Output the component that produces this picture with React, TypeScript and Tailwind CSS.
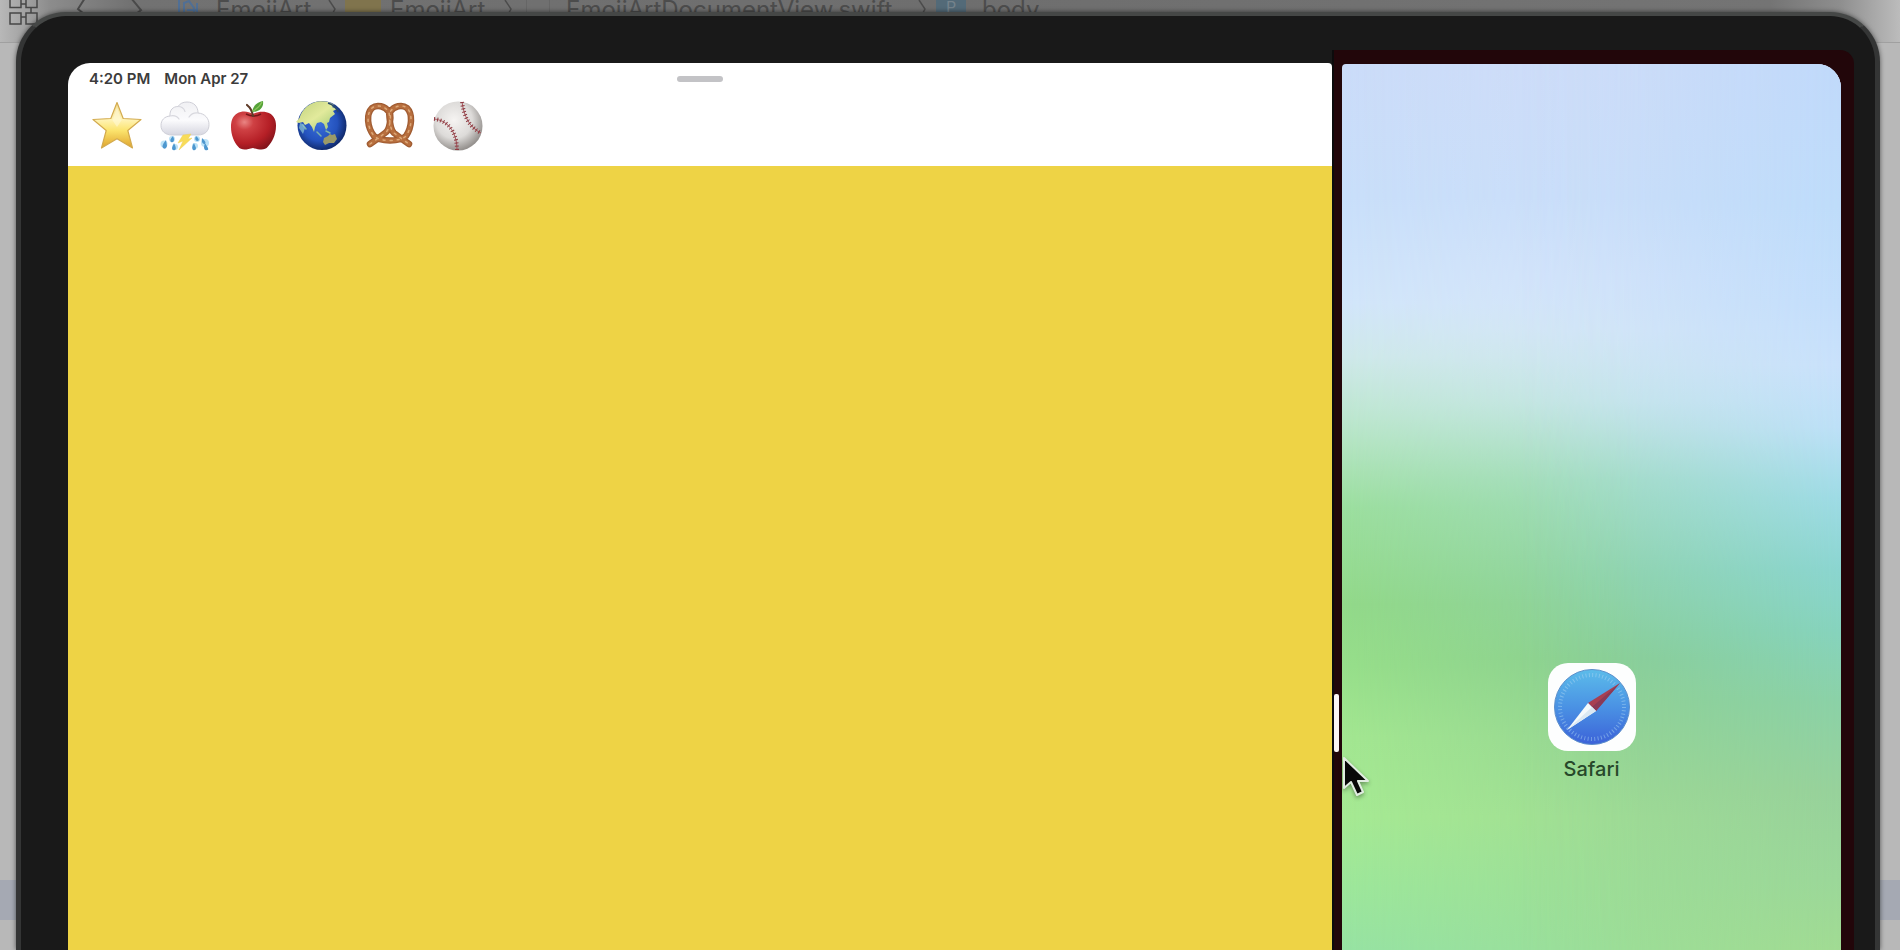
import type { ReactNode } from "react";

function Star() {
  return (
    <svg viewBox="0 0 52 52" className="size-[52px]" aria-hidden="true">
      <defs>
        <linearGradient id="star" x1="0" y1="0" x2="0" y2="1">
          <stop offset="0" stopColor="#f3dc92" />
          <stop offset=".38" stopColor="#fff3b5" />
          <stop offset=".62" stopColor="#fbe36c" />
          <stop offset="1" stopColor="#dfa32c" />
        </linearGradient>
      </defs>
      <path d="M26 2.500 32.200 18.500 50 19.500 36.800 30.500 41.500 48 26 38.800 10.500 48 15.200 30.500 2 19.500 19.800 18.500Z" fill="url(#star)" stroke="#d3ab50" strokeWidth="1.200" strokeLinejoin="round" />
      <path d="M26 7 30.500 20.500 26 27 21.500 20.500Z" fill="#fffbe0" opacity=".5" />
    </svg>
  );
}

function Storm() {
  return (
    <svg viewBox="0 0 52 52" className="size-[52px]" aria-hidden="true">
      <defs>
        <linearGradient id="cloud" x1="0" y1="0" x2="0" y2="1">
          <stop offset="0" stopColor="#f0f0f3" />
          <stop offset=".55" stopColor="#fbfbfd" />
          <stop offset="1" stopColor="#d6d6e0" />
        </linearGradient>
      </defs>
      <path d="M13 35C6 35 2 31 2 25.500 2 20 5.500 16.500 11 16 10.500 10 14 6.500 19 6.500 21 3.500 24 2 28 2 35 2 39 6.500 39 13 46 13.500 50 18.500 50 24.500 50 31 46 35 39 35Z" fill="url(#cloud)" stroke="#cfcfd7" strokeWidth="1" />
      <path d="M11 16c4-1 7 0 9 3M19 6.500c4 0 6 2 7 5M39 13c-4-.5-7 1-9 4" fill="none" stroke="#d8d8de" strokeWidth="1.200" strokeLinecap="round" />
      <path d="m24 35 8-1-3 5 4-1-13 12 4-9-5 2Z" fill="#f8dc58" stroke="#efd05c" strokeWidth=".5" />
      <g fill="#9fd6f5" opacity=".7">
        <circle cx="5" cy="44" r="3.500" /><circle cx="13" cy="39" r="3" /><circle cx="16" cy="47" r="3" /><circle cx="38" cy="39" r="3" /><circle cx="36" cy="46" r="3" /><circle cx="46" cy="43" r="4" />
      </g>
      <g fill="#4d97cf">
        <path d="M7 40q-5 6-3 8 3 2 4-2ZM14 36q-4 4-2 6 3 1 3-3ZM15 43q3 6 1 7-3 1-3-2ZM37 36q-2 4 1 5 3 0 1-3ZM43 38q-1 5 2 6 3-1 0-4ZM35 43q-3 5-1 7 3 1 3-2ZM46 43q-2 5 0 7 4 1 3-2Z" />
      </g>
    </svg>
  );
}

function RedApple() {
  return (
    <svg viewBox="0 0 52 52" className="size-[52px]" aria-hidden="true">
      <defs>
        <radialGradient id="apple" cx=".3" cy=".28" r=".8">
          <stop offset="0" stopColor="#ea8583" />
          <stop offset=".25" stopColor="#cf4144" />
          <stop offset=".7" stopColor="#b51f26" />
          <stop offset="1" stopColor="#84141b" />
        </radialGradient>
      </defs>
      <path d="M26 14C21 11 15 10.500 10 13.500 5 16.500 4 22 4 27c0 8 3 15 7 19.500 3 4 8 3.500 15 1.500 7 2 12 2.500 15-1.500 4-4.500 8-11.500 8-20.500 0-6-2-10-6-12.500-5-2.500-12-2-17 .5Z" fill="url(#apple)" />
      <path d="M19 14q8 4 15 0" stroke="#74161a" strokeWidth="1.500" fill="none" />
      <path d="M26 16q-1-7-6-11" fill="none" stroke="#5e3b28" strokeWidth="2.200" strokeLinecap="round" />
      <path d="M25 12C26 6 30 2 36 1c1 6-3 11-11 11Z" fill="#55a339" />
      <path d="M26 11q6-3 9-9" fill="none" stroke="#8bc45c" strokeWidth="1.200" />
    </svg>
  );
}

function Globe() {
  return (
    <svg viewBox="0 0 52 52" className="size-[52px]" aria-hidden="true">
      <defs>
        <radialGradient id="ocean" cx=".45" cy=".45" r=".56">
          <stop offset="0" stopColor="#3b70dc" />
          <stop offset=".65" stopColor="#2452bd" />
          <stop offset="1" stopColor="#102a6c" />
        </radialGradient>
        <linearGradient id="land" x1="0" y1="0" x2="1" y2="1">
          <stop offset="0" stopColor="#bfd07c" />
          <stop offset=".5" stopColor="#e2ea9c" />
          <stop offset="1" stopColor="#98c66e" />
        </linearGradient>
      </defs>
      <circle cx="27" cy="25.500" r="24.500" fill="url(#ocean)" />
      <path d="M4.500 18C7 9 15 2 25 1.300 31 1 36 2.500 39 5l-2 2 5 2-4 2 2 3-5 4-1 4-2 1 1 4-2 3-2-6-3-2-4 1-2 4-1 5-2-5-3-4-4 2-2-3-4 1-3-1Z" fill="url(#land)" />
      <path d="M8 25l3 4M22 32l4 4M31 31l4 2" stroke="#7fb3a8" strokeWidth="1.500" strokeLinecap="round" />
      <path d="M5 23l3 1 2 4-2 6-4-6Z" fill="#8fc8d4" opacity=".7" />
      <path d="m29 38 4-2 2-2 2 1 3-1 2 5-3 4-5 0-4 2-2-3Z" fill="#9b9a68" />
      <path d="M33 3q8 3 10 9" fill="none" stroke="#2a4a6c" strokeWidth="1.500" />
    </svg>
  );
}

function Pretzel() {
  const rope =
    "M7 44 14 39 22 33C27 30 28 18 27 12 31 6 39 4 44 8 50 14 49 27 43 36 37 42 17 42 11 36 4 27 3 14 9 8 14 4 22 6 26 12 27 18 26 28 31 33L39 39 46 44";
  return (
    <svg viewBox="0 0 52 52" className="size-[52px]" aria-hidden="true">
      <g fill="none" strokeLinecap="round" strokeLinejoin="round">
        <path d={rope} stroke="#a05c32" strokeWidth="6.500" />
        <path d={rope} stroke="#b86f3e" strokeWidth="4" />
        <path d={rope} stroke="#dca878" strokeWidth="1.500" strokeDasharray="2 5" />
      </g>
    </svg>
  );
}

function Baseball() {
  return (
    <svg viewBox="0 0 52 52" className="size-[52px]" aria-hidden="true">
      <defs>
        <radialGradient id="ball" cx=".42" cy=".38" r=".62">
          <stop offset="0" stopColor="#f6f4f2" />
          <stop offset=".6" stopColor="#dddbd9" />
          <stop offset="1" stopColor="#96928f" />
        </radialGradient>
      </defs>
      <circle cx="27" cy="26" r="24.500" fill="url(#ball)" />
      <g fill="none">
        <path d="M31 2C33 16 38 27 50 33" stroke="#a4545a" strokeWidth="1" />
        <path d="M31 2C33 16 38 27 50 33" stroke="#8f3a42" strokeWidth="4" strokeDasharray="1 2.200" />
        <path d="M3 19C15 20 26 30 26 50" stroke="#a4545a" strokeWidth="1" />
        <path d="M3 19C15 20 26 30 26 50" stroke="#8f3a42" strokeWidth="4" strokeDasharray="1 2.200" />
      </g>
    </svg>
  );
}

const palette: { name: string; art: ReactNode }[] = [
  { name: "Star", art: <Star /> },
  { name: "Storm cloud", art: <Storm /> },
  { name: "Apple", art: <RedApple /> },
  { name: "Globe", art: <Globe /> },
  { name: "Pretzel", art: <Pretzel /> },
  { name: "Baseball", art: <Baseball /> },
];

function SafariIcon() {
  return (
    <svg viewBox="0 0 88 88" className="size-[88px]" aria-hidden="true">
      <defs>
        <linearGradient id="compass" x1="0" y1="0" x2="0" y2="1">
          <stop offset="0" stopColor="#5cbcea" />
          <stop offset=".5" stopColor="#4a92e4" />
          <stop offset="1" stopColor="#3c62d8" />
        </linearGradient>
      </defs>
      <rect width="88" height="88" rx="20" fill="#fdfefe" />
      <circle cx="44" cy="44" r="37.500" fill="url(#compass)" stroke="#5c8fcb" strokeWidth="1" />
      <circle cx="44" cy="44" r="32" fill="none" stroke="#a9d6f4" strokeWidth="4" strokeDasharray="1 2.350" opacity=".5" />
      <path d="M72 20 40 40 44 44 48 48Z" fill="#a83f52" />
      <path d="M72 20 44 44 48 48Z" fill="#8a3a56" />
      <path d="M19 67 40 40 44 44 48 48Z" fill="#f5fafc" />
      <path d="M19 67 44 44 48 48Z" fill="#dbe9f3" />
    </svg>
  );
}

function Crumb() {
  return (
    <svg viewBox="0 0 8 22" className="h-[22px] w-2 shrink-0" fill="none" stroke="#4c4c4c" strokeWidth="1.500" aria-hidden="true">
      <path d="M1 0 7 9 1 20" />
    </svg>
  );
}

function EditorBackdrop() {
  return (
    <div className="col-start-1 row-start-1 flex flex-col bg-[#b8b8b8]">
      <header className="flex h-[43px] items-start border-b border-[#a0a0a0] bg-[linear-gradient(to_right,#b8b8b8_0px,#8c8c8c_50px,#727272_130px,#6e6e6e_50%,#747474_calc(100%-130px),#8e8e8e_calc(100%-60px),#bcbcbc_100%)] pl-[9px] text-2xl leading-[20px] text-[#4c4c4c]">
        <svg viewBox="0 0 30 26" className="h-[26px] w-[30px] shrink-0" fill="none" stroke="#474747" strokeWidth="1.500" aria-hidden="true">
          <path d="M1-4H12V7.500H1ZM17-4H28V7.500H17ZM1 13H12V24H1ZM17 13H28V24H17ZM12 4H17M22 7V13M12 17H17" />
        </svg>
        <svg viewBox="0 0 68 20" className="ml-9 h-[20px] w-[68px] shrink-0" fill="none" stroke="#4a4a4a" strokeWidth="2" aria-hidden="true">
          <path d="M10-2 3 9 14 18M56-2 66 10 56 18" />
        </svg>
        <svg viewBox="0 0 24 20" className="ml-[34px] h-[20px] w-6 shrink-0" fill="none" stroke="#506f95" strokeWidth="2" aria-hidden="true">
          <path d="M2 0V16M7 16V3L12 1 17 8V16M20 3V16M10 10H19" />
        </svg>
        <span className="ml-[15px] w-[100px]">EmojiArt</span>
        <span className="ml-3"><Crumb /></span>
        <span className="ml-[9px] h-[18px] w-9 bg-[#80744d]" />
        <span className="ml-[9px] w-[100px]">EmojiArt</span>
        <span className="ml-[14px]"><Crumb /></span>
        <span className="ml-[14px] h-[18px] w-6 border-x border-[#666]" />
        <span className="ml-4 w-[340px]">EmojiArtDocumentView.swift</span>
        <span className="ml-3"><Crumb /></span>
        <span className="ml-[10px] flex h-[18px] w-[30px] justify-center bg-[#536a78] text-base leading-[14px] text-[#75838c]">P</span>
        <span className="ml-4">body</span>
      </header>
      <div className="flex-1" />
      <div className="mb-[30px] h-10 bg-[#a5a9b3]" />
    </div>
  );
}

function EmojiArtApp() {
  return (
    <section aria-label="EmojiArt" className="mt-[13px] flex flex-col">
      <header className="flex h-[103px] flex-col rounded-tl-[22px] rounded-tr-[4px] bg-white">
        <div className="mt-1.5 grid h-5 grid-cols-[1fr_auto_1fr] items-center px-[21px]">
          <div className="flex gap-[14px] text-[15px] leading-5 font-semibold text-[#3c3c3c]">
            <span>4:20 PM</span>
            <span>Mon Apr 27</span>
          </div>
          <span className="h-1.5 w-[46px] rounded-full bg-[#c3c3c6]" />
        </div>
        <div className="mt-[11px] flex gap-4 pl-[23px]">
          {palette.map((emoji) => (
            <button key={emoji.name} type="button" aria-label={emoji.name} className="size-[52px]">
              {emoji.art}
            </button>
          ))}
        </div>
      </header>
      <div className="flex-1 bg-[#eed345]" />
    </section>
  );
}

function Divider() {
  return (
    <div className="relative w-[10px] border-l-2 border-[#0c0b0c]">
      <span className="mt-[644px] block h-[58px] w-[5px] rounded-[2px] bg-[#faf5f5]" />
      <svg viewBox="0 0 28 44" className="absolute top-[706px] left-2 z-10 h-11 w-7 overflow-visible drop-shadow-[0_2px_2px_rgba(0,0,0,0.35)]" aria-hidden="true">
        <path d="M2 2V32L9 26 15 39 21 36 16 25H26Z" fill="#080808" stroke="#e0ece0" strokeWidth="2" strokeLinejoin="round" />
      </svg>
    </div>
  );
}

function HomeScreen() {
  return (
    <section aria-label="Home screen" className="mt-[14px] grid flex-1 overflow-hidden rounded-tl-[4px] rounded-tr-[24px]">
      <div className="col-start-1 row-start-1 bg-[linear-gradient(to_bottom,#cbdcf9_0%,#c9dffa_15%,#d2e6fa_27%,#cfe9ea_33%,#bde7cf_40%,#9cdf9f_50%,#92d989_61%,#97df8a_68%,#a3e791_76%,#a6ea93_85%,#9de79b_93%,#97e3a3_100%)]" />
      <div className="col-start-1 row-start-1 bg-[linear-gradient(to_bottom,#cfddf8_0%,#cbdef9_15%,#d3e3fa_24%,#d4e6f7_30%,#c6e5e9_38%,#a4dcc2_47%,#91d3a7_58%,#8acd92_67%,#93d392_75%,#9fdc94_85%,#9bde98_100%)] [mask-image:linear-gradient(to_right,transparent,black_60%)]" />
      <div className="col-start-1 row-start-1 bg-[linear-gradient(to_bottom,#c0d9fa_0%,#bedcfa_16%,#c3defb_27%,#c9e1fb_34%,#bde0f7_41%,#9edbe5_49%,#8bd5d0_57%,#86d3bd_64%,#8bd1a7_72%,#97d19b_82%,#9bd799_92%,#a1db93_100%)] [mask-image:linear-gradient(to_right,transparent_35%,rgba(0,0,0,0.2)_55%,black)]" />
      <div className="z-0 col-start-1 row-start-1 flex flex-col items-center pt-[599px]">
        <a href="#safari" className="flex flex-col items-center text-xl leading-7 font-medium text-[#27482a]">
          <SafariIcon />
          <span className="mt-1">Safari</span>
        </a>
      </div>
    </section>
  );
}

export default function App() {
  return (
    <div className="grid h-screen min-h-[820px] overflow-hidden font-[Inter,'Liberation_Sans',sans-serif]">
      <EditorBackdrop />
      <main className="z-10 col-start-1 row-start-1 mt-3 mr-[20px] ml-[16px] grid grid-cols-[1264fr_522fr] overflow-hidden rounded-t-[50px] border-x-[5px] border-t-4 border-x-[#343535] border-t-[#454746] bg-[#191919] pt-[34px] pr-[21px] pl-[47px] shadow-[0_0_5px_rgba(0,0,0,0.55)]">
        <EmojiArtApp />
        <div className="flex rounded-tr-[14px] bg-[#22060a] pr-[13px]">
          <Divider />
          <HomeScreen />
        </div>
      </main>
    </div>
  );
}
